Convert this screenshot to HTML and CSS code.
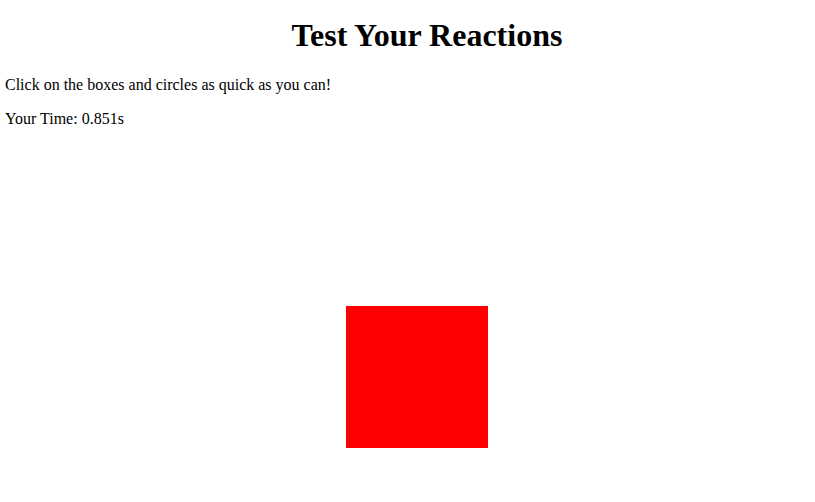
FILE: index.html
```html
<!DOCTYPE html>
<html>
<head>
<meta charset="utf-8">
<title>Test Your Reactions</title>
<link rel="stylesheet" href="styles.css">
</head>
<body>
<h1 class="title">Test Your Reactions</h1>
<p class="intro">Click on the boxes and circles as quick as you can!</p>
<p class="time">Your Time: <span class="time-value">0.851s</span></p>
<div class="shape"></div>
</body>
</html>
```
FILE: styles.css
```css
html, body {
  margin: 0;
  padding: 0;
  background: #fff;
}
body {
  font-family: "Liberation Serif", "Times New Roman", serif;
  font-size: 16px;
  color: #000;
  padding: 0 5px;
  position: relative;
  height: 502px;
  box-sizing: border-box;
  overflow: hidden;
}
.title {
  font-size: 32px;
  font-weight: bold;
  text-align: center;
  margin: 17px 0 22px 39px;
}
.intro, .time {
  margin: 16px 0;
}
.shape {
  position: absolute;
  left: 346px;
  top: 306px;
  width: 142px;
  height: 142px;
  background: #ff0000;
}
```
